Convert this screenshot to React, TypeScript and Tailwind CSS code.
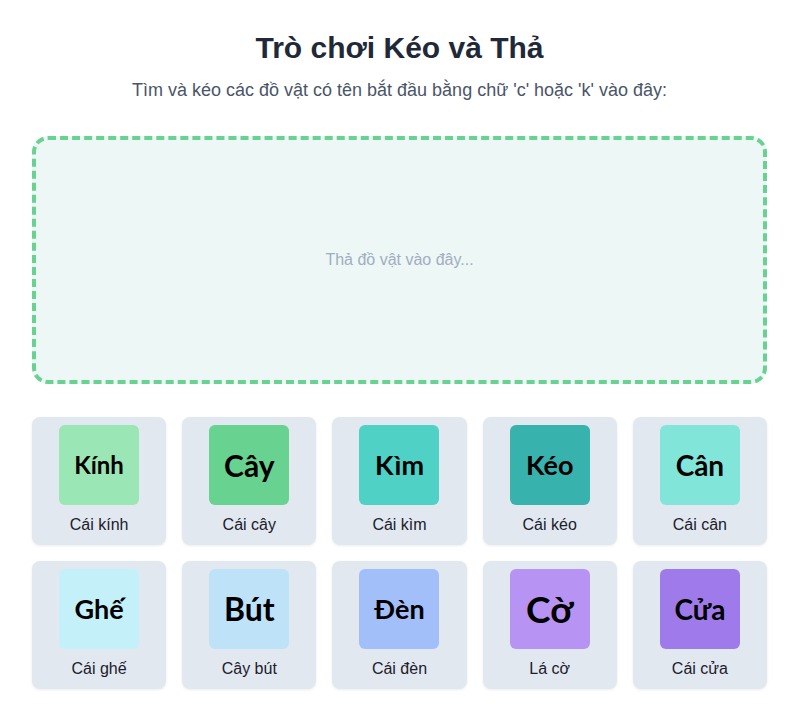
const items = [
  { word: "Kính", label: "Cái kính", tile: "bg-[#9ae6b4]", size: "text-[24px]" },
  { word: "Cây", label: "Cái cây", tile: "bg-[#68d391]", size: "text-[30px]" },
  { word: "Kìm", label: "Cái kìm", tile: "bg-[#4fd1c5]", size: "text-[27px]" },
  { word: "Kéo", label: "Cái kéo", tile: "bg-[#38b2ac]", size: "text-[27px]" },
  { word: "Cân", label: "Cái cân", tile: "bg-[#81e6d9]", size: "text-[28px]" },
  { word: "Ghế", label: "Cái ghế", tile: "bg-[#c4f1f9]", size: "text-[27px]" },
  { word: "Bút", label: "Cây bút", tile: "bg-[#bee3f8]", size: "text-[32px]" },
  { word: "Đèn", label: "Cái đèn", tile: "bg-[#a3bffa]", size: "text-[27px]" },
  { word: "Cờ", label: "Lá cờ", tile: "bg-[#b794f4]", size: "text-[37px]" },
  { word: "Cửa", label: "Cái cửa", tile: "bg-[#9f7aea]", size: "text-[28px]" },
];

/** 끌어다 놓는 물건 카드 */
function ItemCard({ word, label, tile, size }: (typeof items)[number]) {
  return (
    <div className="flex h-[128px] flex-col items-center rounded-lg bg-[#e2e8f0] pt-2 shadow-[0_1px_3px_rgba(0,0,0,0.08)] cursor-grab">
      <div
        className={`flex h-20 w-20 items-center justify-center rounded-md ${tile} ${size} font-bold text-black`}
        style={{ fontFamily: "Lato, sans-serif" }}
      >
        {word}
      </div>
      <div className="mt-[8px] text-[16px] text-[#1a202c]">{label}</div>
    </div>
  );
}

export default function App() {
  return (
    <div
      className="min-h-[723px] bg-white pl-8 pr-[22px] pt-[30px]"
      style={{ fontFamily: '"Liberation Sans", Arial, sans-serif' }}
    >
      {/* 제목 */}
      <h1 className="text-center text-[30px] font-bold leading-9 text-[#1f2937]">
        Trò chơi Kéo và Thả
      </h1>
      <p className="mt-[11px] text-center text-[18px] text-[#4a5568]">
        Tìm và kéo các đồ vật có tên bắt đầu bằng chữ 'c' hoặc 'k' vào đây:
      </p>

      {/* 드롭 영역 */}
      <div className="mt-[32px] flex h-[248px] items-center justify-center rounded-2xl border-4 border-dashed border-[#68d391] bg-[#edf7f6]">
        <span className="text-[16px] text-[#a0aec0]">Thả đồ vật vào đây...</span>
      </div>

      {/* 물건 목록 */}
      <div className="mt-[33px] grid grid-cols-5 gap-4">
        {items.map((it) => (
          <ItemCard key={it.word} {...it} />
        ))}
      </div>
    </div>
  );
}
